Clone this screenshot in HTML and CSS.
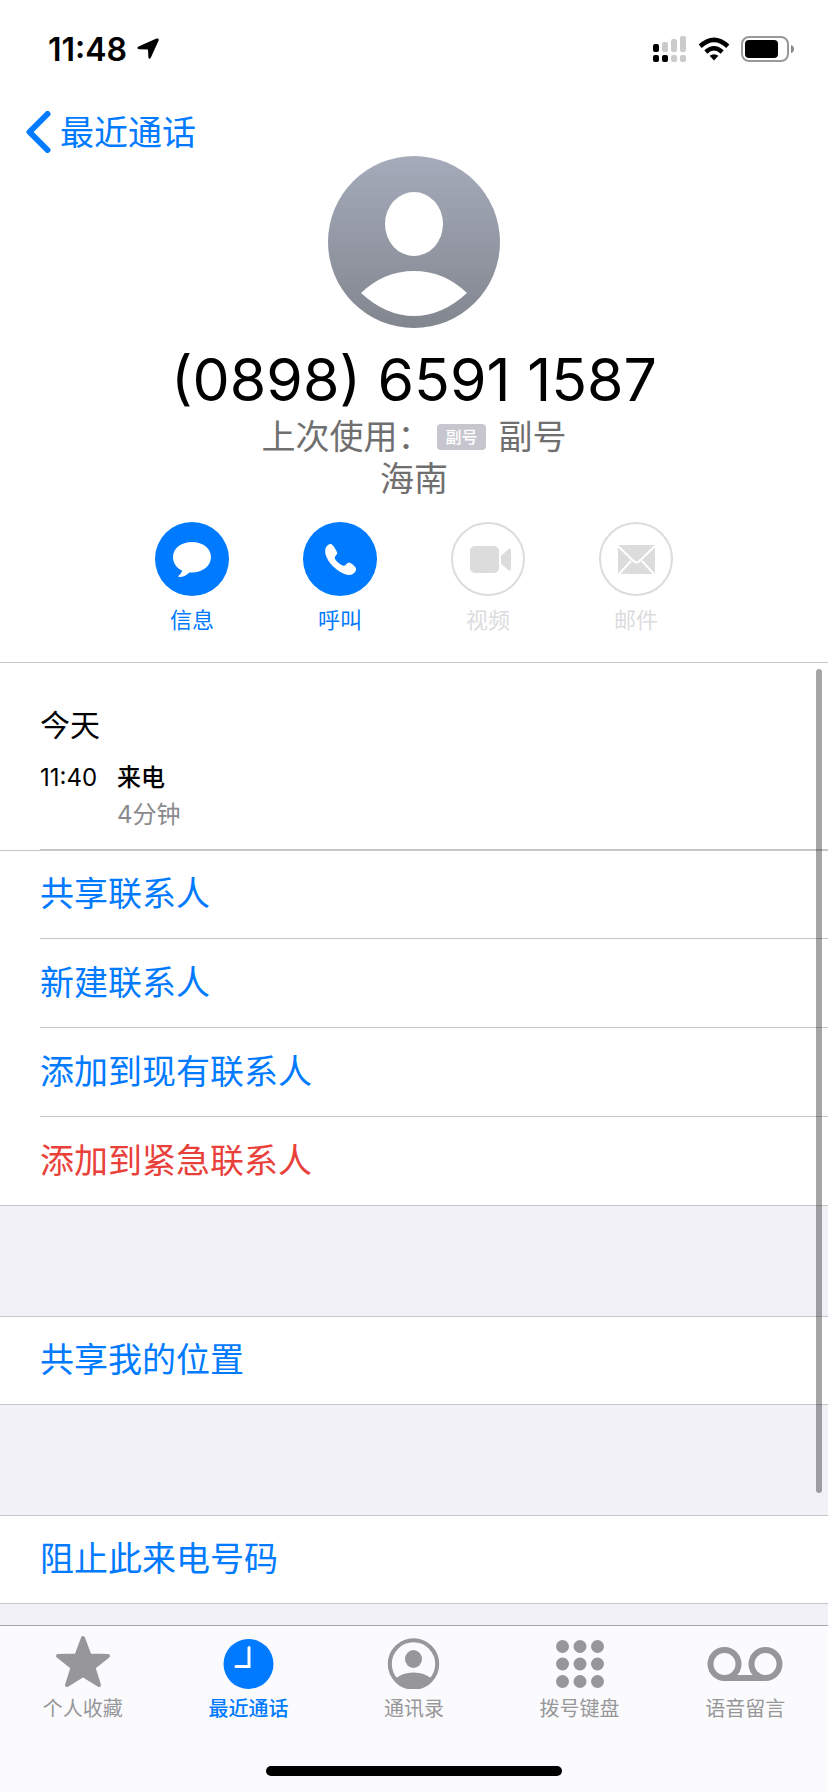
FILE: index.html
```html
<!DOCTYPE html>
<html lang="zh-CN">
<head>
    <meta charset="UTF-8">
    <meta name="viewport" content="width=device-width, initial-scale=1.0">
    <title>最近通话</title>
    <link rel="stylesheet" href="styles.css">
</head>
<body>

<div class="screen">
    <div class="status-bar">
        <div class="status-left">
            <span class="clock">11:48</span>
            <svg width="22" height="22" viewBox="0 0 22 22"><path d="M1.5 8.6 L19.500 0.600 Q22.300 0 21.600 2.500 L13.800 19.800 Q12.400 22 11.400 19.500 L11 11.400 L2 11.200 Q-1 10.200 1.500 8.600Z"/></svg>
        </div>
        <div class="status-right">
            <svg width="34" height="28" viewBox="0 0 34 28">
                <g fill="#cbcbcb">
                    <rect x="9" y="7" width="6" height="10" rx="2"/>
                    <rect x="18" y="4" width="6" height="13" rx="2"/>
                    <rect x="27" y="1" width="6" height="16" rx="2"/>
                    <rect x="18" y="20" width="6" height="7" rx="2"/>
                    <rect x="27" y="20" width="6" height="7" rx="2"/>
                </g>
                <rect x="0" y="9" width="6" height="8" rx="2"/>
                <rect x="0" y="20" width="6" height="7" rx="2"/>
                <rect x="9" y="20" width="6" height="7" rx="2"/>
            </svg>
            <svg width="32" height="24" viewBox="0 0 32 24">
                <path d="M2.2 9.2 Q16 -3.600 29.800 9.200" fill="none" stroke="#000" stroke-width="4.600"/>
                <path d="M7.800 15 Q16 7.600 24.200 15" fill="none" stroke="#000" stroke-width="4.400"/>
                <path d="M11.600 18.800 Q16 15.600 20.400 18.800 L16 23.500Z"/>
            </svg>
            <svg width="54" height="26" viewBox="0 0 54 26">
                <rect x="1" y="1" width="46" height="24" rx="7" fill="none" stroke="#999" stroke-width="2"/>
                <rect x="4" y="4" width="33" height="18" rx="4"/>
                <path d="M50 9 Q53 10 53 13 Q53 16 50 17Z" fill="#888"/>
            </svg>
        </div>
    </div>

    <header class="contact-header">
        <a class="back" href="#">
            <svg width="26" height="42" viewBox="0 0 26 42"><path d="M22.500 3 L4.500 21 L22.500 39" fill="none" stroke="#007aff" stroke-width="6" stroke-linecap="round" stroke-linejoin="round"/></svg>
            <span>最近通话</span>
        </a>

        <svg class="avatar" viewBox="0 0 172 172">
            <defs>
                <linearGradient id="avatarFill" x1="0" y1="0" x2="0" y2="1">
                    <stop offset="0" stop-color="#a5abba"/>
                    <stop offset="1" stop-color="#82868f"/>
                </linearGradient>
            </defs>
            <circle cx="86" cy="86" r="86" fill="url(#avatarFill)"/>
            <ellipse cx="86" cy="68" rx="29" ry="32" fill="#fff"/>
            <path d="M33 137 Q56 115 86 115 Q116 115 139 137 Q114 160 86 160 Q58 160 33 137Z" fill="#fff"/>
        </svg>

        <h1 class="number">(0898) 6591 1587</h1>
        <p class="detail">上次使用：<span class="badge">副号</span>副号</p>
        <p class="detail">海南</p>

        <div class="actions">
            <button class="action" type="button">
                <span class="circle">
                    <svg width="74" height="74" viewBox="0 0 74 74"><path d="M37 20 C48 20 56 26.500 56 35 C56 43.500 48 50.500 37 50.500 L34.500 50.400 C31 53.500 28 55 24.500 55 C23 55 23 54.200 24 53.300 C26 51.600 27 50 27 48.500 C21.500 46 18 41 18 35 C18 26.500 26 20 37 20Z" fill="#fff"/></svg>
                </span>
                信息
            </button>
            <button class="action" type="button">
                <span class="circle">
                    <svg width="74" height="74" viewBox="0 0 74 74"><path d="M22.500 26.500 C23.500 23.500 26.500 21.500 28.500 22.200 C30 22.700 33.500 28.500 34.200 30.500 C34.800 32.500 31.500 34 31.800 36 C32.400 39 38.500 44 41 43.800 C43 43.700 44 40.500 46 40.600 C48 40.700 52.500 44.500 53 46.500 C53.500 49 51 52 48 52.800 C44.500 53.500 39.500 51.700 35 48.500 C30 45 25.500 40 23.500 35 C22.200 32 21.800 29 22.500 26.500Z" fill="#fff"/></svg>
                </span>
                呼叫
            </button>
            <button class="action" type="button" disabled>
                <span class="circle">
                    <svg width="70" height="70" viewBox="2 2 70 70" fill="#dcdcdc"><rect x="19" y="24" width="29" height="27" rx="5"/><path d="M50 34 L57 27.500 Q60 25.500 60 29 V46.500 Q60 50 57 48 L50 41.500Z"/></svg>
                </span>
                视频
            </button>
            <button class="action" type="button" disabled>
                <span class="circle">
                    <svg width="70" height="70" viewBox="2 2 70 70">
                        <rect x="19" y="23" width="37" height="29" rx="1" fill="#dcdcdc"/>
                        <path d="M19 24 L34 38.500 Q37.500 42.500 41 38.500 L56 24 M20 52 L32 39 M55 52 L43 39" fill="none" stroke="#fff" stroke-width="2"/>
                    </svg>
                </span>
                邮件
            </button>
        </div>
    </header>

    <main class="content">
        <section class="history">
            <h2>今天</h2>
            <div class="call">
                <span class="call-time">11:40</span>
                <div>
                    <div class="call-type">来电</div>
                    <div class="call-length">4分钟</div>
                </div>
            </div>
        </section>
        <div class="group">
            <button class="row" type="button">共享联系人</button>
            <button class="row" type="button">新建联系人</button>
            <button class="row" type="button">添加到现有联系人</button>
            <button class="row danger" type="button">添加到紧急联系人</button>
        </div>
        <div class="group">
            <button class="row" type="button">共享我的位置</button>
        </div>
        <div class="group">
            <button class="row" type="button">阻止此来电号码</button>
        </div>
        <div class="scrollbar"></div>
    </main>

    <nav class="tab-bar">
        <a class="tab" href="#">
            <svg width="76" height="54" viewBox="0 0 76 54"><path d="M38 3 L44.500 20.500 L63 21 L48.500 32.500 L54 50 L38 40 L22 50 L27.500 32.500 L13 21 L31.500 20.500Z" fill="#97979a" stroke="#97979a" stroke-width="4" stroke-linejoin="round"/></svg>
            个人收藏
        </a>
        <a class="tab active" href="#">
            <svg width="76" height="54" viewBox="0 0 76 54"><circle cx="38.500" cy="29" r="25" fill="#007aff"/><path d="M39 12.500 V31.500 H26" fill="none" stroke="#fff" stroke-width="3" stroke-linecap="round"/></svg>
            最近通话
        </a>
        <a class="tab" href="#">
            <svg width="76" height="54" viewBox="0 0 76 54"><circle cx="37.500" cy="29" r="23.700" fill="none" stroke="#97979a" stroke-width="4"/><ellipse cx="37.500" cy="24" rx="8.500" ry="9" fill="#97979a"/><path d="M19.500 43.500 Q26.500 37.500 37.500 37.500 Q48.500 37.500 55.500 43.500 Q48.500 53.500 37.500 53.500 Q26.500 53.500 19.500 43.500Z" fill="#97979a"/></svg>
            通讯录
        </a>
        <a class="tab" href="#">
            <svg width="76" height="54" viewBox="0 0 76 54" fill="#97979a">
                <circle cx="20.500" cy="11.500" r="6.500"/><circle cx="38" cy="11.500" r="6.500"/><circle cx="55.500" cy="11.500" r="6.500"/>
                <circle cx="20.500" cy="29" r="6.500"/><circle cx="38" cy="29" r="6.500"/><circle cx="55.500" cy="29" r="6.500"/>
                <circle cx="20.500" cy="46.500" r="6.500"/><circle cx="38" cy="46.500" r="6.500"/><circle cx="55.500" cy="46.500" r="6.500"/>
            </svg>
            拨号键盘
        </a>
        <a class="tab" href="#">
            <svg width="76" height="54" viewBox="0 0 76 54" fill="none" stroke="#97979a" stroke-width="6"><circle cx="17.500" cy="29" r="14"/><circle cx="58.500" cy="29" r="14"/><path d="M17.500 43 H58.500"/></svg>
            语音留言
        </a>
    </nav>
    <div class="home-area">
        <div class="home-bar"></div>
    </div>
</div>

</body>
</html>
```

FILE: styles.css
```css
* {
    box-sizing: border-box;
}

body {
    margin: 0;
    background: #fff;
    color: #000;
    font-family: Inter, "Noto Sans CJK SC", sans-serif;
}

h1, h2, p {
    margin: 0;
    font-weight: 400;
}

a {
    text-decoration: none;
}

button {
    border: none;
    background: none;
    padding: 0;
    font-family: inherit;
}

svg {
    display: block;
}

.screen {
    display: flex;
    flex-direction: column;
    height: 100vh;
    overflow: hidden;
}

/* status bar */
.status-bar {
    display: flex;
    justify-content: space-between;
    align-items: center;
    height: 88px;
    padding: 10px 33px 0 48px;
}

.status-left, .status-right {
    display: flex;
    align-items: center;
    gap: 10px;
}

.status-right {
    gap: 11px;
}

.clock {
    font-size: 32px;
    font-weight: 600;
}

/* contact header */
.contact-header {
    display: flex;
    flex-direction: column;
    align-items: center;
    padding-bottom: 28px;
    border-bottom: 1px solid #c6c6c8;
}

.back {
    display: flex;
    align-items: center;
    align-self: flex-start;
    gap: 9px;
    height: 68px;
    padding: 20px 0 0 25px;
    color: #007aff;
    font-size: 34px;
}

.back span {
    padding-bottom: 4px;
}

.avatar {
    width: 172px;
    height: 172px;
    margin-bottom: 16px;
}

.number {
    font-size: 59px;
    line-height: 72px;
}

.detail {
    display: flex;
    align-items: center;
    color: #6f6f6f;
    font-size: 34px;
    line-height: 42px;
}

.badge {
    margin: 0 13px 0 6px;
    padding: 0 8px;
    border-radius: 4px;
    background: #c7c6ce;
    color: #fff;
    font-size: 16px;
    font-weight: 500;
    line-height: 26px;
}

.actions {
    display: flex;
    justify-content: center;
    gap: 74px;
    margin-top: 22px;
}

.action {
    display: flex;
    flex-direction: column;
    align-items: center;
    gap: 10px;
    width: 74px;
    color: #007aff;
    font-size: 22px;
    line-height: 28px;
}

.action:disabled {
    color: #dcdcde;
}

.circle {
    width: 74px;
    height: 74px;
    border-radius: 50%;
    background: #007aff;
}

.action:disabled .circle {
    border: 2px solid #dcdcdc;
    background: #fff;
}

/* scrolling list */
.content {
    position: relative;
    flex: 1;
    min-height: 0;
    overflow: hidden;
    background: #f2f1f7;
}

.history {
    padding: 40px 0 0 40px;
    background: #fff;
}

.history h2 {
    font-size: 30px;
    line-height: 44px;
}

.call {
    display: flex;
    gap: 17px;
    margin-top: 12px;
    padding-bottom: 16px;
    border-bottom: 1px solid #c6c6c8;
    font-size: 24px;
    line-height: 37px;
}

.call-time {
    min-width: 60px;
}

.call-type {
    font-weight: 500;
}

.call-length {
    color: #8a8a8e;
}

.group {
    margin-bottom: 110px;
    border-top: 1px solid #c6c6c8;
    border-bottom: 1px solid #c6c6c8;
    background: #fff;
}

.row {
    display: block;
    width: calc(100% - 40px);
    height: 87px;
    margin-left: 40px;
    padding-bottom: 6px;
    color: #007aff;
    font-size: 34px;
    text-align: left;
}

.row + .row {
    height: 89px;
    border-top: 1px solid #c6c6c8;
}

.danger {
    color: #e9403a;
}

.scrollbar {
    position: absolute;
    top: 6px;
    right: 6px;
    bottom: 132px;
    width: 6px;
    border-radius: 3px;
    background: rgba(0, 0, 0, 0.35);
}

/* bottom tabs */
.tab-bar {
    display: flex;
    padding-top: 9px;
    border-top: 1px solid #a5a5ab;
    background: #fbfbfd;
}

.tab {
    display: flex;
    flex: 1;
    flex-direction: column;
    align-items: center;
    gap: 6px;
    color: #97979a;
    font-size: 20px;
    line-height: 28px;
}

.active {
    color: #007aff;
    font-weight: 500;
}

.home-area {
    display: flex;
    justify-content: center;
    align-items: flex-end;
    height: 69px;
    padding-bottom: 16px;
    background: #fbfbfd;
}

.home-bar {
    width: 296px;
    height: 10px;
    border-radius: 5px;
    background: #000;
}
```
